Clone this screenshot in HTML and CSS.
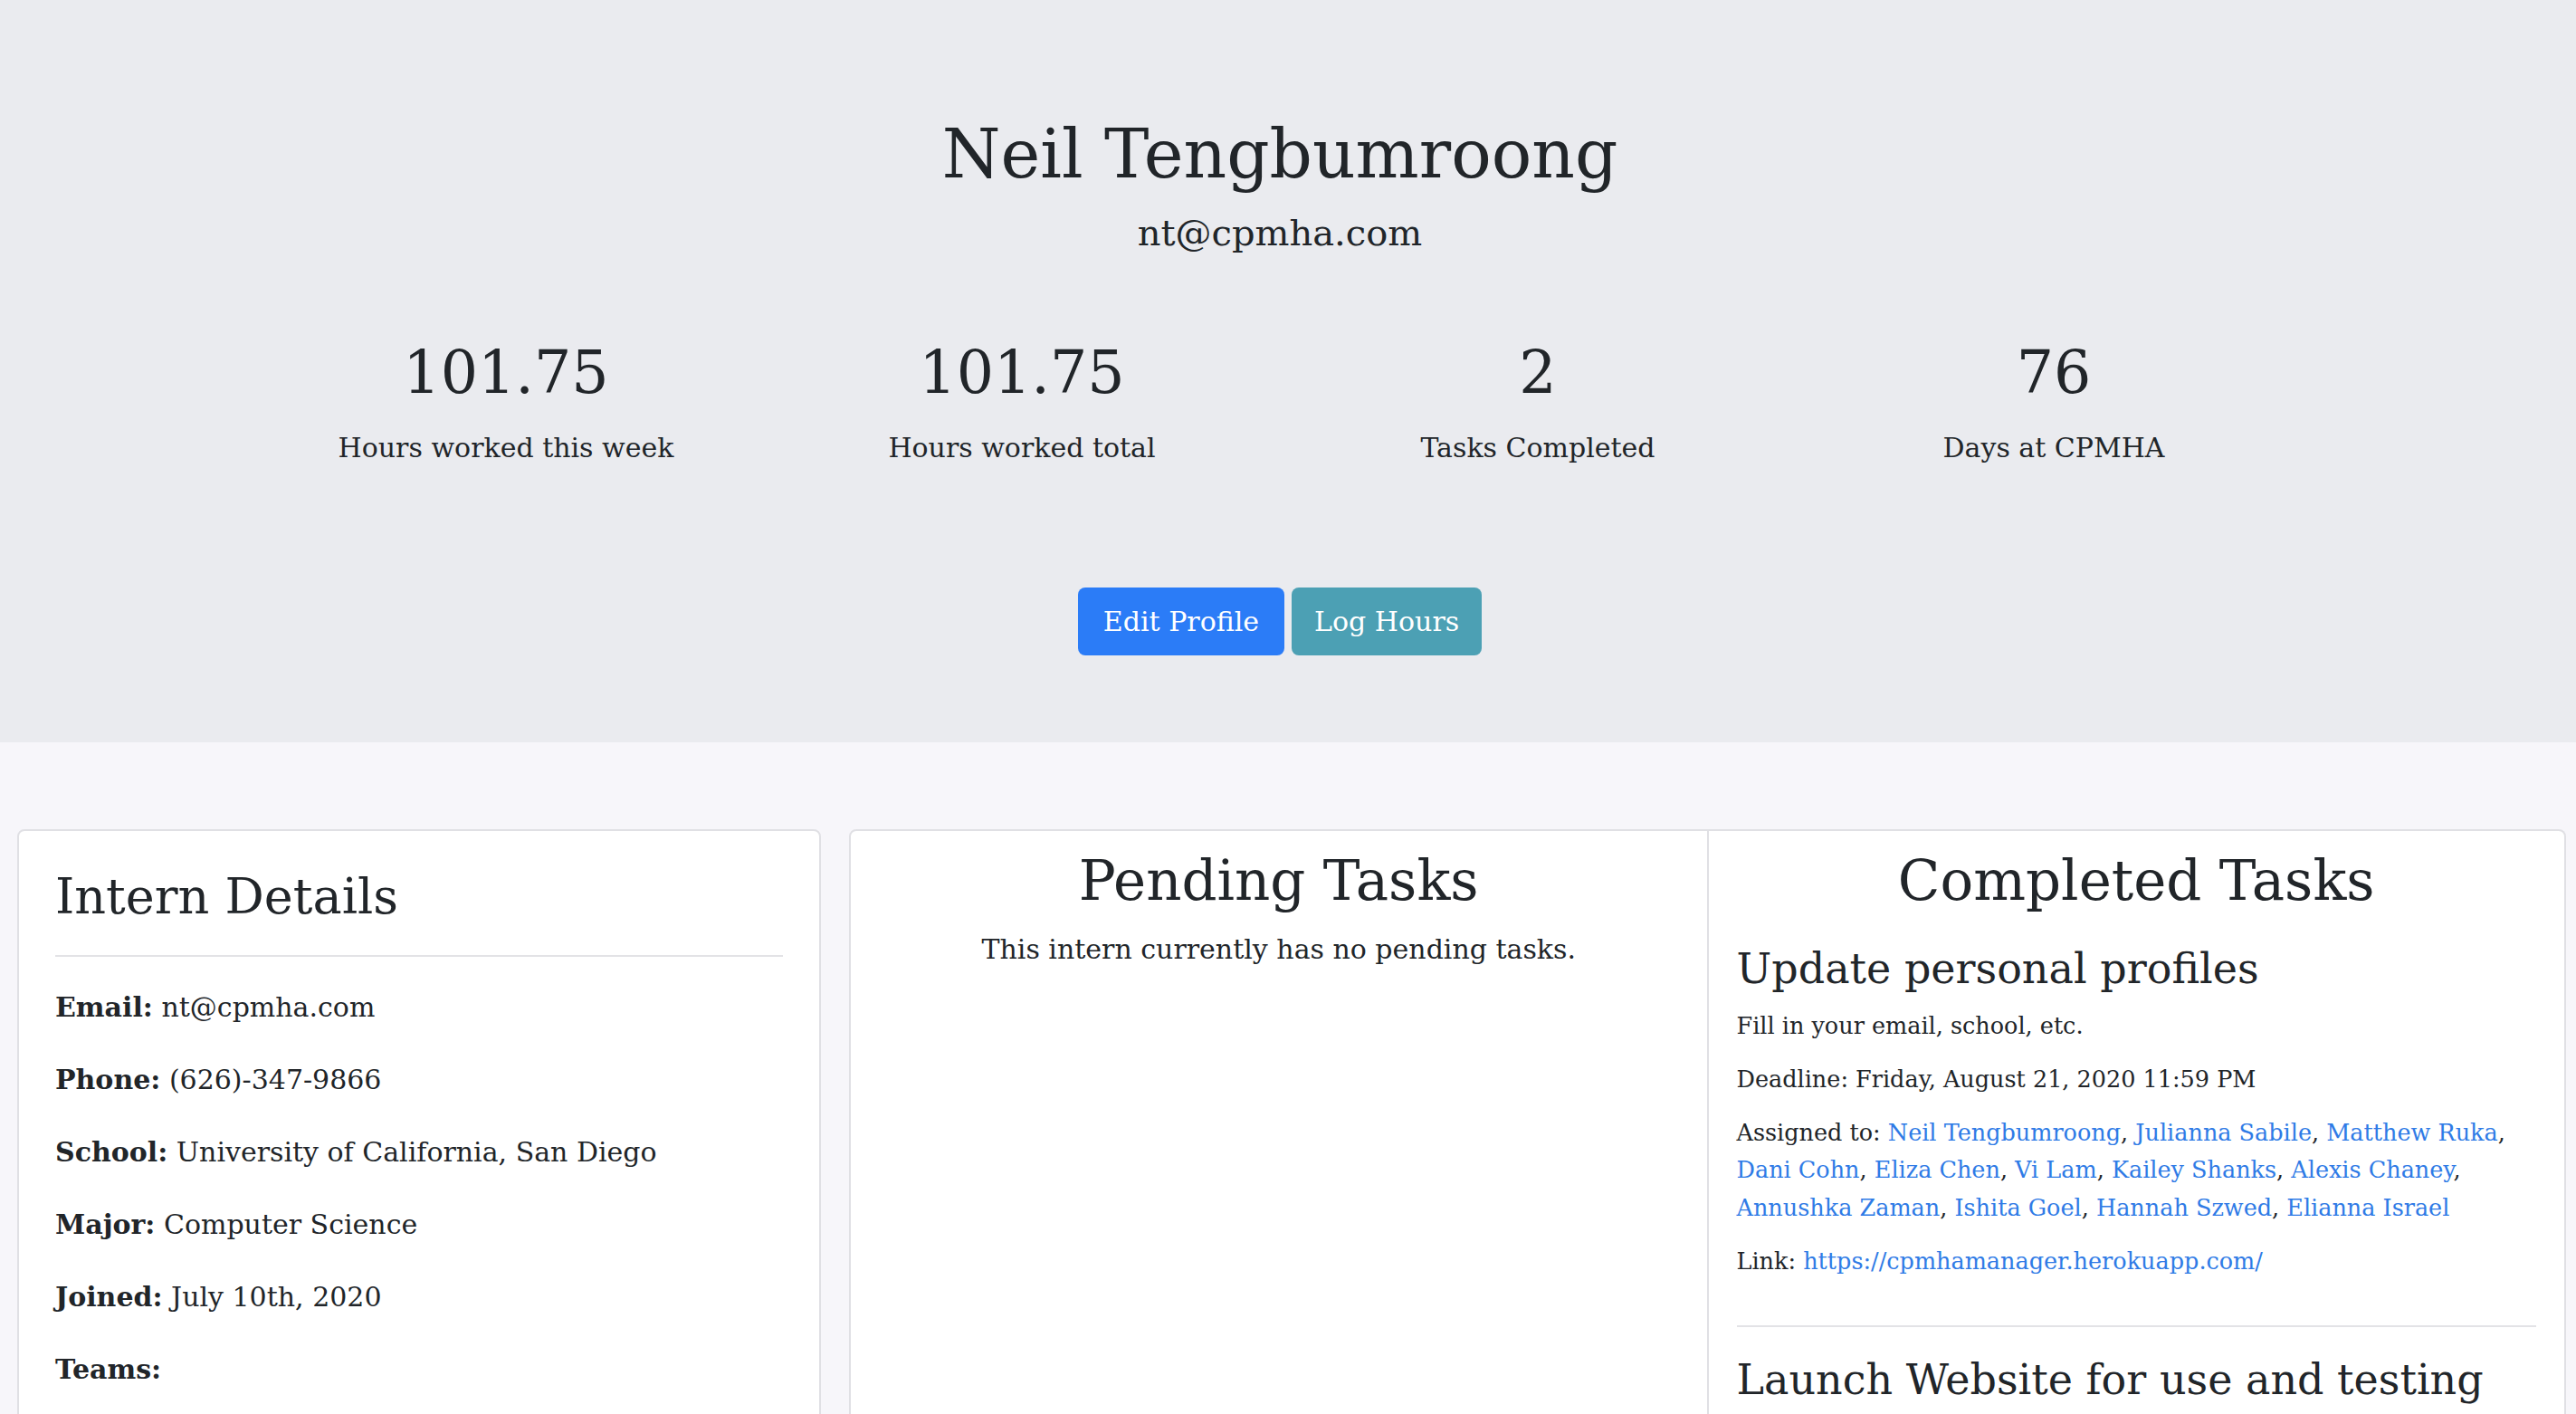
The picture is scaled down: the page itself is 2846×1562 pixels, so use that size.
FILE: index.html
```html
<!DOCTYPE html>
<html lang="en">
<head>
<meta charset="utf-8">
<title>Neil Tengbumroong</title>
<link rel="stylesheet" href="styles.css">
</head>
<body>
<header class="hero">
  <h1 class="hero-name">Neil Tengbumroong</h1>
  <p class="hero-email">nt@cpmha.com</p>
  <div class="stats">
    <div class="stat"><div class="stat-value">101.75</div><div class="stat-label">Hours worked this week</div></div>
    <div class="stat"><div class="stat-value">101.75</div><div class="stat-label">Hours worked total</div></div>
    <div class="stat"><div class="stat-value">2</div><div class="stat-label">Tasks Completed</div></div>
    <div class="stat"><div class="stat-value">76</div><div class="stat-label">Days at CPMHA</div></div>
  </div>
  <div class="actions">
    <a class="btn btn-primary" href="#">Edit Profile</a>
    <a class="btn btn-info" href="#">Log Hours</a>
  </div>
</header>
<main class="content">
  <section class="card details">
    <h2 class="details-title">Intern Details</h2>
    <hr class="divider">
    <p><b>Email:</b> nt@cpmha.com</p>
    <p><b>Phone:</b> (626)-347-9866</p>
    <p><b>School:</b> University of California, San Diego</p>
    <p><b>Major:</b> Computer Science</p>
    <p><b>Joined:</b> July 10th, 2020</p>
    <p><b>Teams:</b></p>
  </section>
  <div class="card-group">
    <section class="card tasks">
      <h2 class="tasks-title">Pending Tasks</h2>
      <p class="empty">This intern currently has no pending tasks.</p>
    </section>
    <section class="card tasks">
      <h2 class="tasks-title">Completed Tasks</h2>
      <div class="task">
        <h3 class="task-title">Update personal profiles</h3>
        <p class="task-desc">Fill in your email, school, etc.</p>
        <p>Deadline: Friday, August 21, 2020 11:59 PM</p>
        <p>Assigned to: <a href="#">Neil Tengbumroong</a>, <a href="#">Julianna Sabile</a>, <a href="#">Matthew Ruka</a>, <a href="#">Dani Cohn</a>, <a href="#">Eliza Chen</a>, <a href="#">Vi Lam</a>, <a href="#">Kailey Shanks</a>, <a href="#">Alexis Chaney</a>, <a href="#">Annushka Zaman</a>, <a href="#">Ishita Goel</a>, <a href="#">Hannah Szwed</a>, <a href="#">Elianna Israel</a></p>
        <p>Link: <a href="#">https://cpmhamanager.herokuapp.com/</a></p>
      </div>
      <hr class="task-divider">
      <div class="task">
        <h3 class="task-title task-title-next">Launch Website for use and testing</h3>
        <p class="task-desc">Start using the website to log hours and track tasks.</p>
      </div>
    </section>
  </div>
</main>
</body>
</html>
```

FILE: styles.css
```css
html, body {
  margin: 0;
  padding: 0;
}

body {
  font-family: "DejaVu Serif", "Liberation Serif", serif;
  color: #212529;
  background: #f7f6fa;
}

a {
  color: #2f7be6;
  text-decoration: none;
}

/* ---------- hero ---------- */
.hero {
  background: #eaebef;
  padding: 126px 18px 96px 0;
  text-align: center;
}

.hero-name {
  font-size: 74px;
  line-height: 88px;
  font-weight: 400;
  margin: 0;
}

.hero-email {
  font-size: 40px;
  line-height: 60px;
  margin: 13px 0 0;
}

.stats {
  display: grid;
  grid-template-columns: repeat(4, 570px);
  justify-content: center;
  margin-top: 85px;
}

.stat-value {
  font-size: 65px;
  line-height: 80px;
}

.stat-label {
  font-size: 30px;
  line-height: 45px;
  margin-top: 20px;
}

.actions {
  display: flex;
  justify-content: center;
  gap: 8px;
  margin-top: 132px;
}

.btn {
  display: inline-block;
  font-size: 30px;
  line-height: 45px;
  padding: 15px 28px;
  border-radius: 8px;
  color: #fff;
}

.btn-primary {
  background: #2b7cf7;
}

.btn-info {
  background: #4ca0b4;
  padding-left: 25px;
  padding-right: 25px;
}

/* ---------- content ---------- */
.content {
  display: grid;
  grid-template-columns: 888px 1fr;
  column-gap: 31px;
  align-items: start;
  padding: 96px 11px 0 19px;
}

.card {
  background: #fff;
  border: 2px solid #e0e0e4;
  border-radius: 8px;
  min-height: 700px;
  box-sizing: border-box;
}

.details {
  padding: 40px 40px;
}

.details-title {
  font-size: 54px;
  line-height: 65px;
  font-weight: 400;
  margin: 0;
}

.divider {
  border: 0;
  border-top: 2px solid #e3e3e6;
  margin: 32px 0 33px;
}

.details p {
  font-size: 30px;
  line-height: 45px;
  margin: 0 0 35px;
}

.card-group {
  display: flex;
}

.card-group .card {
  flex: 1 1 0;
}

.card-group .card:first-child {
  border-top-right-radius: 0;
  border-bottom-right-radius: 0;
}

.card-group .card + .card {
  border-left: 0;
  border-top-left-radius: 0;
  border-bottom-left-radius: 0;
}

.tasks {
  padding: 21px 31px;
}

.tasks-title {
  font-size: 61px;
  line-height: 68px;
  font-weight: 400;
  margin: 0;
  text-align: center;
}

.empty {
  font-size: 30px;
  line-height: 45px;
  margin: 19px 0 0;
  text-align: center;
}

.task-title {
  font-size: 46px;
  line-height: 55px;
  font-weight: 400;
  margin: 36px 0 0;
}

.task-title-next {
  margin-top: 31px;
}

.task p {
  font-size: 25.5px;
  line-height: 41.5px;
  margin: 17.5px 0 0;
}

.task p.task-desc {
  margin-top: 14.5px;
}

.task-divider {
  border: 0;
  border-top: 2px solid #e3e3e6;
  margin: 50px 0 0;
}
```
